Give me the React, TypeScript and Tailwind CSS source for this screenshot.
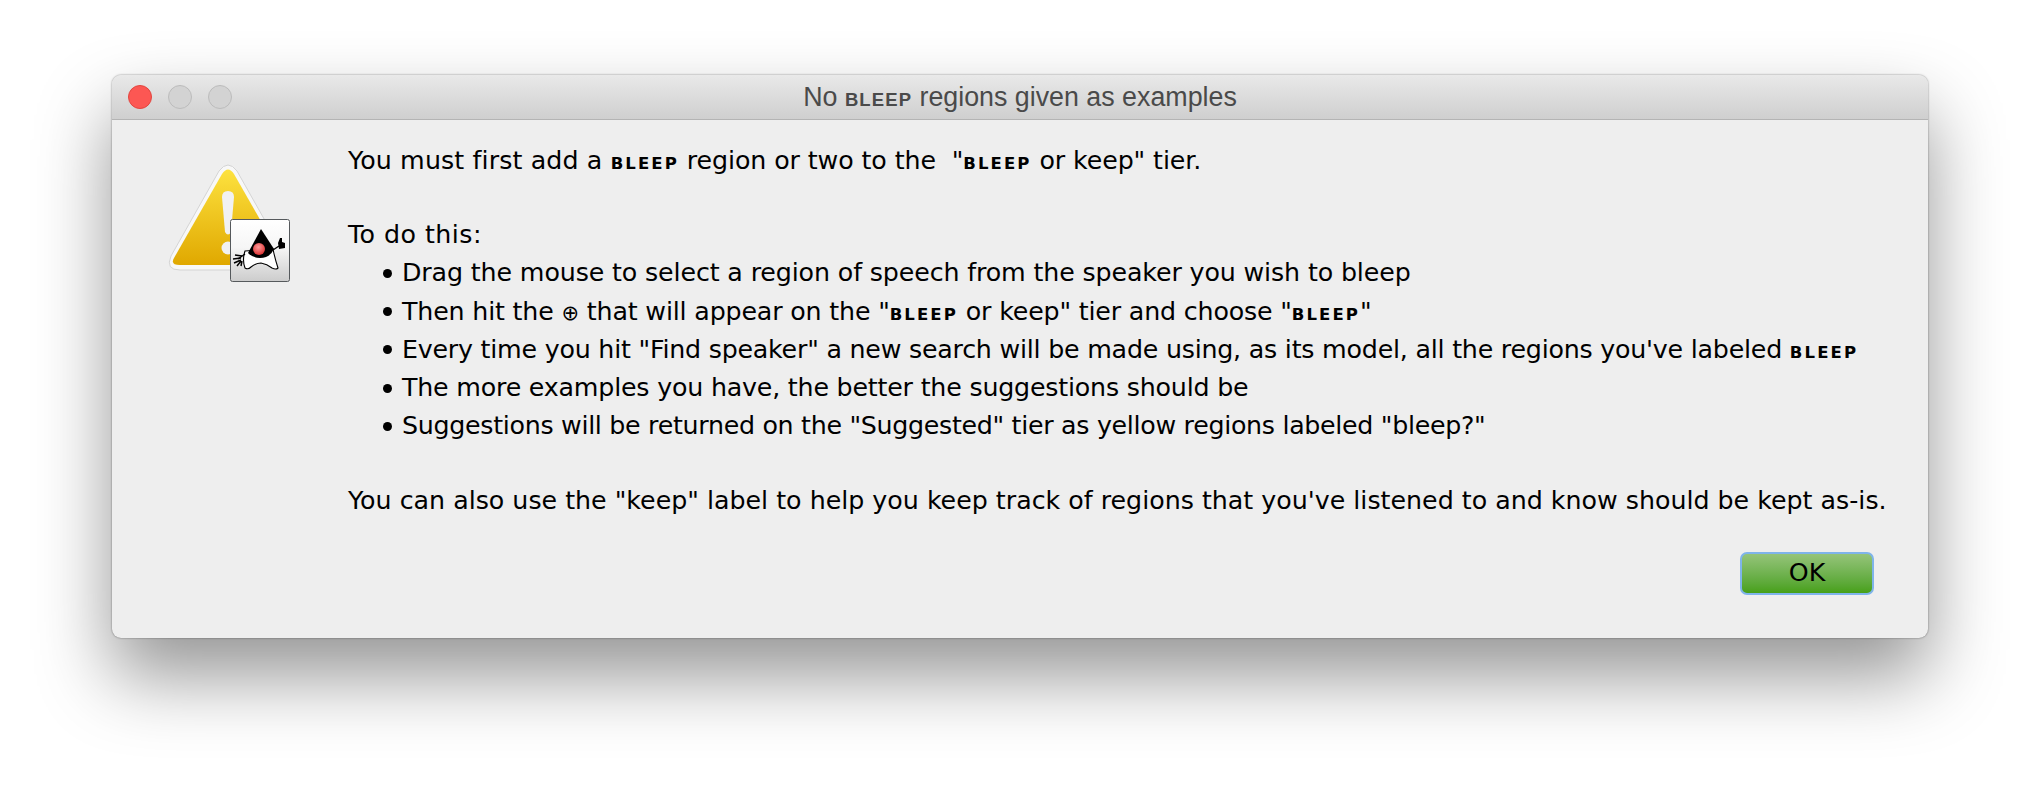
function Sc({ children }: { children: string }) {
  return <span className="text-[16.5px] font-bold leading-none tracking-[2.1px]">{children}</span>;
}

function Icon() {
  return (
    <svg width="124" height="124" viewBox="0 0 124 124" className="shrink-0">
      <defs>
        <linearGradient id="y" x1="0" y1="0" x2="0" y2="1">
          <stop offset="0" stopColor="#fde23f" />
          <stop offset="1" stopColor="#e0a800" />
        </linearGradient>
        <linearGradient id="b" x1="0" y1="0" x2="0" y2="1">
          <stop offset="0" stopColor="#ffffff" />
          <stop offset="0.45" stopColor="#f6f6f6" />
          <stop offset="1" stopColor="#cccccc" />
        </linearGradient>
        <radialGradient id="r" cx="0.45" cy="0.35" r="0.7">
          <stop offset="0" stopColor="#ff9c9c" />
          <stop offset="1" stopColor="#d92b2b" />
        </radialGradient>
      </defs>
      <path d="M51 7 Q60 -5 69 7 L117 92 Q123 106 108 106 L12 106 Q-3 106 3 92 Z" fill="#f8f8f8" stroke="#d4d4d4" strokeWidth="1" />
      <path d="M54 10 Q60 1 66 10 L114 94 Q118 101 108 101 L12 101 Q2 101 6 94 Z" fill="url(#y)" />
      <path d="M54 33 Q54 27 60 27 Q66 27 66 33 L63 68 Q60 73 57 68 Z" fill="#f1f1f1" />
      <circle cx="60" cy="84" r="6.5" fill="#f1f1f1" />
      <rect x="62.5" y="55.5" width="59" height="62" rx="2" fill="url(#b)" stroke="#55595c" strokeWidth="1" />
      <path d="M77 87 Q74 96 77 104 Q80 106 83 103 Q88 99 93 99 Q99 100 104 104 Q108 106 110 104 Q107 95 105 85 Z" fill="#fff" stroke="#000" strokeWidth="1.1" />
      <path d="M93 65 L106 85 Q102 94 92 94 Q85 94 80 89 Z" fill="#000" />
      <circle cx="91" cy="85" r="6" fill="url(#r)" />
      <path d="M105 86 L111 82" fill="none" stroke="#000" strokeWidth="1.4" />
      <path d="M110 79 L112 74 L114 74 L114 78 L117 79 L117 84 L111 85 Z" fill="#000" />
      <path d="M77 90 L70 95" fill="none" stroke="#000" strokeWidth="1.4" />
      <path d="M74 92 L67 91 M73 94 L65 95 M73 96 L66 99 M73 97 L69 102 M74 97 L73 102" stroke="#000" strokeWidth="1.5" fill="none" />
    </svg>
  );
}

export default function App() {
  const bullets = [
    { c: "tracking-[-0.13px]", n: <>Drag the mouse to select a region of speech from the speaker you wish to bleep</> },
    { c: "tracking-[-0.17px]", n: <>Then hit the <span className="text-[21px] leading-none">⊕</span> that will appear on the "<Sc>BLEEP</Sc> or keep" tier and choose "<Sc>BLEEP</Sc>"</> },
    { c: "tracking-[-0.22px]", n: <>Every time you hit "Find speaker" a new search will be made using, as its model, all the regions you've labeled <Sc>BLEEP</Sc></> },
    { c: "tracking-[-0.2px]", n: <>The more examples you have, the better the suggestions should be</> },
    { c: "tracking-[-0.3px]", n: <>Suggestions will be returned on the "Suggested" tier as yellow regions labeled "bleep?"</> },
  ];
  return (
    <div className="h-[786px] w-[2040px] overflow-hidden bg-white pl-[112px] pt-[75px] font-['DejaVu_Sans',sans-serif]">
      <div className="flex h-[563px] w-[1816px] flex-col overflow-hidden rounded-[9px] bg-[#eeeeee] shadow-[0_38px_75px_rgba(0,0,0,0.42),0_0_2px_rgba(0,0,0,0.5)]">
        <div className="relative flex h-[45px] shrink-0 items-center justify-center border-b border-[#b4b4b4] bg-gradient-to-b from-[#e9e9e9] to-[#cfcfcf]">
          <div className="absolute left-[16px] top-[10px] flex gap-[16px]">
            <div className="h-[24px] w-[24px] rounded-full border border-[#e2463f] bg-[#fc5753]" />
            <div className="h-[24px] w-[24px] rounded-full border border-[#bcbcbc] bg-[#d3d3d3]" />
            <div className="h-[24px] w-[24px] rounded-full border border-[#bcbcbc] bg-[#d3d3d3]" />
          </div>
          <span className="font-['Liberation_Sans',sans-serif] text-[26.8px] leading-none text-[#4a4a4a]">
            No <span className="text-[18.5px] font-bold tracking-[1.1px]">BLEEP</span> regions given as examples
          </span>
        </div>
        <div className="flex flex-1 flex-col">
          <div className="flex">
            <div className="w-[236px] shrink-0 pl-[56px] pt-[44px]">
              <Icon />
            </div>
            <div className="whitespace-nowrap pt-[22px] text-[25.3px] leading-[38.2px] text-black">
              <div>
                <span className="tracking-[0.12px]">You must first add a </span>
                <Sc>BLEEP</Sc>
                <span className="tracking-[-0.1px]"> region or two to the&nbsp; "</span>
                <Sc>BLEEP</Sc>
                <span className="tracking-[-0.1px]"> or keep" tier.</span>
              </div>
              <div className="h-[36px]" />
              <div className="tracking-[0.45px]">To do this:</div>
              <ul className="pl-[35px]">
                {bullets.map((b, i) => (
                  <li key={i} className="flex items-center gap-[10px]">
                    <span className="h-[9px] w-[9px] shrink-0 rounded-full bg-black" />
                    <span className={b.c}>{b.n}</span>
                  </li>
                ))}
              </ul>
              <div className="h-[37px]" />
              <div>You can also use the "keep" label to help you keep track of regions that you've listened to and know should be kept as-is.</div>
            </div>
          </div>
          <div className="mt-[31px] flex justify-end pr-[54px]">
            <button className="flex h-[43px] w-[134px] items-center justify-center rounded-[7px] border-[2px] border-[#7fb4ea] bg-gradient-to-b from-[#95c479] to-[#47a015] text-[25.3px] leading-none text-black">
              OK
            </button>
          </div>
        </div>
      </div>
    </div>
  );
}
